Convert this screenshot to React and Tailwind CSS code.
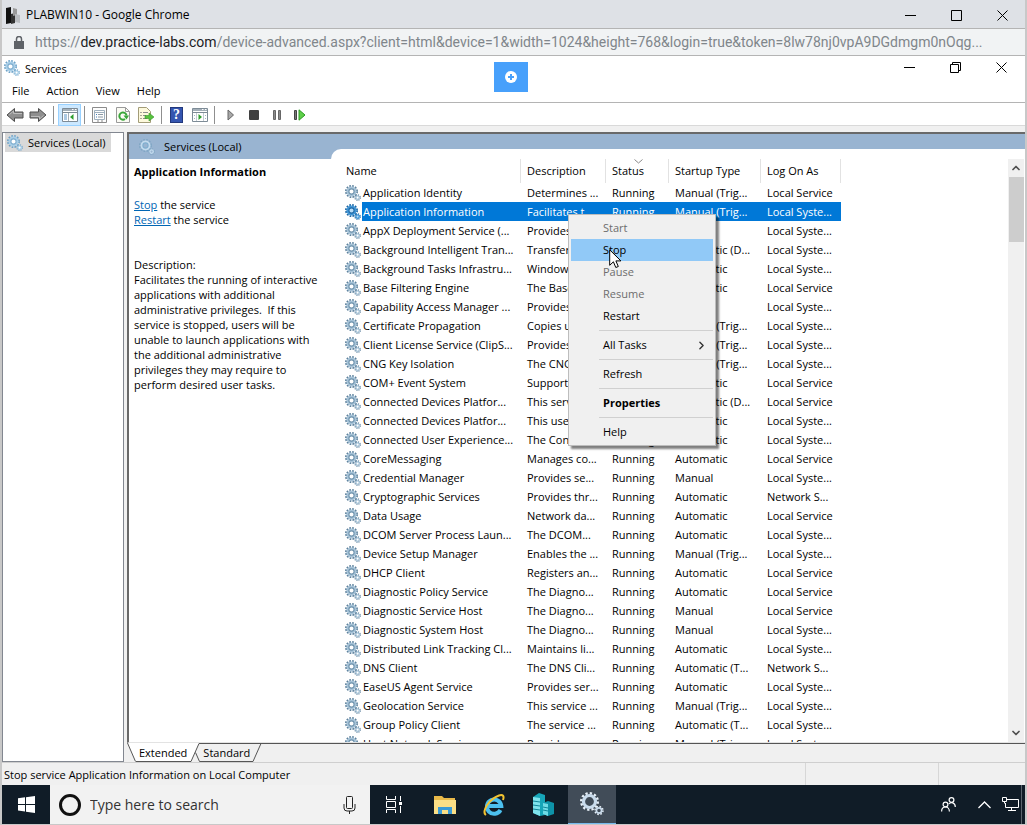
import React, { useState } from 'react';
import { ChevronUp, ChevronDown, ChevronRight } from 'lucide-react';

const services = [
  ['Application Identity', 'Determines ...', 'Manual (Trig...', 'Local Service'],
  ['Application Information', 'Facilitates t...', 'Manual (Trig...', 'Local Syste...'],
  ['AppX Deployment Service (...', 'Provides inf...', 'Manual', 'Local Syste...'],
  ['Background Intelligent Tran...', 'Transfers fil...', 'Automatic (D...', 'Local Syste...'],
  ['Background Tasks Infrastru...', 'Windows in...', 'Automatic', 'Local Syste...'],
  ['Base Filtering Engine', 'The Base Fil...', 'Automatic', 'Local Service'],
  ['Capability Access Manager ...', 'Provides fac...', 'Manual', 'Local Syste...'],
  ['Certificate Propagation', 'Copies user ...', 'Manual (Trig...', 'Local Syste...'],
  ['Client License Service (ClipS...', 'Provides inf...', 'Manual (Trig...', 'Local Syste...'],
  ['CNG Key Isolation', 'The CNG ke...', 'Manual (Trig...', 'Local Syste...'],
  ['COM+ Event System', 'Supports Sy...', 'Automatic', 'Local Service'],
  ['Connected Devices Platfor...', 'This service ...', 'Automatic (D...', 'Local Service'],
  ['Connected Devices Platfor...', 'This user ser...', 'Automatic', 'Local Syste...'],
  ['Connected User Experience...', 'The Connec...', 'Automatic', 'Local Syste...'],
  ['CoreMessaging', 'Manages co...', 'Automatic', 'Local Service'],
  ['Credential Manager', 'Provides se...', 'Manual', 'Local Syste...'],
  ['Cryptographic Services', 'Provides thr...', 'Automatic', 'Network S...'],
  ['Data Usage', 'Network da...', 'Automatic', 'Local Service'],
  ['DCOM Server Process Laun...', 'The DCOM...', 'Automatic', 'Local Syste...'],
  ['Device Setup Manager', 'Enables the ...', 'Manual (Trig...', 'Local Syste...'],
  ['DHCP Client', 'Registers an...', 'Automatic', 'Local Service'],
  ['Diagnostic Policy Service', 'The Diagno...', 'Automatic', 'Local Service'],
  ['Diagnostic Service Host', 'The Diagno...', 'Manual', 'Local Service'],
  ['Diagnostic System Host', 'The Diagno...', 'Manual', 'Local Syste...'],
  ['Distributed Link Tracking Cl...', 'Maintains li...', 'Automatic', 'Local Syste...'],
  ['DNS Client', 'The DNS Cli...', 'Automatic (T...', 'Network S...'],
  ['EaseUS Agent Service', 'Provides ser...', 'Automatic', 'Local Syste...'],
  ['Geolocation Service', 'This service ...', 'Manual (Trig...', 'Local Syste...'],
  ['Group Policy Client', 'The service ...', 'Automatic (T...', 'Local Syste...'],
  ['Host Network Service', 'Provides su...', 'Manual (Trig...', 'Local Syste...'],
];

const menuItems = [
  { label: 'Start', disabled: true },
  { label: 'Stop', active: true },
  { label: 'Pause', disabled: true },
  { label: 'Resume', disabled: true },
  { label: 'Restart' },
  null,
  { label: 'All Tasks', submenu: true },
  null,
  { label: 'Refresh' },
  null,
  { label: 'Properties', bold: true },
  null,
  { label: 'Help' },
];

const Gears = ({ className = 'size-4', body = '#a9cfe8', edge = '#6fa3c8', hole = '#7faecf', center = '#fff' }) => (
  <svg viewBox="0 0 16 16" className={className} fill="none">
    <circle cx="6.5" cy="6.5" r="5.6" stroke={edge} strokeWidth="1.8" strokeDasharray="1.7 1.232" />
    <circle cx="6.5" cy="6.5" r="5" fill={body} />
    <circle cx="6.5" cy="6.5" r="2.6" fill={center} stroke={hole} strokeWidth="1.1" />
    <circle cx="12.6" cy="12.6" r="2.6" stroke={edge} strokeWidth="1.4" strokeDasharray="1.1 0.942" />
    <circle cx="12.6" cy="12.6" r="1.7" fill={center} stroke={body} strokeWidth="1.3" />
  </svg>
);

const Minimize = () => <svg width="11" height="11" stroke="#000"><path d="M0 5.5h11" /></svg>;
const Close = () => <svg width="11" height="11" stroke="#000"><path d="M.5.5l10 10M10.5.5l-10 10" /></svg>;
const Maximize = () => <svg width="11" height="11" stroke="#000" fill="none"><path d="M.5.5h10v10H.5z" /></svg>;
const Restore = () => (
  <svg width="11" height="11" stroke="#000" fill="none"><path d="M.5 2.5h8v8h-8zM2.5 2.5v-2h8v8h-2" /></svg>
);

const WindowControls = ({ restore }) => (
  <div className="flex">
    <button aria-label="Minimize" className="w-[46px] h-[22px] flex items-center justify-center"><Minimize /></button>
    <button aria-label="Maximize" className="w-[46px] h-[22px] flex items-center justify-center">
      {restore ? <Restore /> : <Maximize />}
    </button>
    <button aria-label="Close" className="w-[46px] h-[22px] flex items-center justify-center"><Close /></button>
  </div>
);

const Arrow = ({ flip }) => (
  <svg width="18" height="16" viewBox="0 0 18 16" className={flip ? 'rotate-180' : ''}>
    <path d="M1 8l7.5-6.500V5H17v6H8.500v3.500z" fill="#8f8f8f" stroke="#4f4f4f" />
    <path d="M3.500 7.500l4-3.500v2.500H16" fill="none" stroke="#bdbdbd" />
  </svg>
);

const PaneIcon = ({ right }) => (
  <svg width="16" height="14" viewBox="0 0 16 14" fill="none">
    <path d="M.5.5h15v13H.5z" fill="#fff" stroke="#7d8b96" />
    <path d="M1 1h14v2H1z" fill="#a3afb9" />
    <path d="M10 1.500h1.500M13 1.500h1.500" stroke="#fff" />
    <path d="M1 4.500h14" stroke="#7d8b96" />
    {right ? (
      <>
        <path d="M4.500 5v8M11.500 5v8" stroke="#c3ccd3" />
        <path d="M2 7.500h1M2 10.500h1M13 7.500h1M13 10.500h1" stroke="#9fb5c7" />
        <path d="M6.500 6l3.500 3-3.500 3z" fill="#2f9e2f" />
      </>
    ) : (
      <>
        <path d="M6.500 5v8" stroke="#a3afb9" />
        <path d="M2 7h3M2 9h3M2 11h3" stroke="#5b94c8" />
        <path d="M11.500 6L8 9l3.500 3z" fill="#2f9e2f" />
      </>
    )}
  </svg>
);

const PropertiesIcon = () => (
  <svg width="15" height="16" viewBox="0 0 15 16" fill="none">
    <path d="M.5.5h14v15H.5z" fill="#fdfdfd" stroke="#8b8b8b" />
    <path d="M2.500 3.500h10v9h-10z" stroke="#9fb0be" />
    <path d="M3 5.500h9" stroke="#9fb0be" />
    <path d="M4 7.500h1M4 10h1" stroke="#3f7fc0" />
    <path d="M6 7.500h5M6 10h5" stroke="#8b9aa6" />
    <path d="M5 14h2M9 14h2" stroke="#8b8b8b" />
  </svg>
);

const RefreshIcon = () => (
  <svg width="14" height="16" viewBox="0 0 14 16" fill="none">
    <path d="M.5.5h9l4 4v11H.5z" fill="#fbfbf4" stroke="#9a9a9a" />
    <path d="M9.500.5v4h4" stroke="#9a9a9a" />
    <path d="M9 12A3.600 3.600 0 1 1 10.500 8.500" stroke="#3aa63a" strokeWidth="2" />
    <path d="M7.500 8.500h5.500L10.500 12.500z" fill="#3aa63a" />
  </svg>
);

const ExportIcon = () => (
  <svg width="16" height="16" viewBox="0 0 16 16" fill="none">
    <path d="M.5.5h8l4 4v11H.5z" fill="#fdf9dc" stroke="#a39c78" />
    <path d="M2.500 5.500h1M2.500 8.500h1M2.500 11.500h1" stroke="#555" />
    <path d="M5 5.500h5M5 8.500h3M5 11.500h4" stroke="#8d8d8d" />
    <path d="M7 8.500h4V6l5 4-5 4v-2.500H7z" fill="#58c23e" stroke="#35952a" strokeWidth=".6" />
  </svg>
);

const HelpIcon = () => (
  <span className="flex w-[13px] h-4 items-center justify-center bg-[#3455b0] border border-[#22387c] text-white font-bold text-sm leading-none font-['Liberation_Serif',serif]">?</span>
);

const Divider = () => <span className="w-px h-[18px] bg-[#8f8f8f] shrink-0" />;

const ToolButton = ({ label, active, children }) => (
  <button
    aria-label={label}
    className={`h-[22px] w-[23px] flex items-center justify-center ${active ? 'bg-[#cce8ff] border border-[#99d1ff]' : ''}`}
  >
    {children}
  </button>
);

const Toolbar = () => (
  <div className="h-[23px] flex items-center pl-px pt-px bg-white border-b border-[#d9d9d9]">
    <ToolButton label="Back"><Arrow /></ToolButton>
    <ToolButton label="Forward"><Arrow flip /></ToolButton>
    <div className="w-[9px] flex justify-center"><Divider /></div>
    <ToolButton label="Show/Hide Console Tree" active><PaneIcon /></ToolButton>
    <div className="w-[6px] flex justify-center"><Divider /></div>
    <div className="flex pl-px">
      <ToolButton label="Properties"><PropertiesIcon /></ToolButton>
      <ToolButton label="Refresh"><RefreshIcon /></ToolButton>
      <ToolButton label="Export List"><ExportIcon /></ToolButton>
    </div>
    <div className="w-2 flex justify-center"><Divider /></div>
    <ToolButton label="Help"><HelpIcon /></ToolButton>
    <ToolButton label="Show/Hide Action Pane"><PaneIcon right /></ToolButton>
    <div className="w-[6px] flex justify-center"><Divider /></div>
    <div className="flex pl-[2px]">
      <ToolButton label="Start Service">
        <svg width="8" height="12"><path d="M1 1l5.500 5L1 11z" fill="#a8a8a8" stroke="#666" /></svg>
      </ToolButton>
      <ToolButton label="Stop Service"><span className="size-[10px] bg-[#404040] rounded-[1px]" /></ToolButton>
      <ToolButton label="Pause Service">
        <svg width="8" height="10" fill="#8a8a8a" stroke="#666"><path d="M.5.5h2v9h-2zM5.500.5h2v9h-2z" /></svg>
      </ToolButton>
      <ToolButton label="Restart Service">
        <svg width="12" height="12">
          <path d="M.5 1.500h2v9h-2z" fill="#777" stroke="#444" />
          <path d="M5 .8L11 6l-6 5.200z" fill="#5fd04a" stroke="#2b9a22" />
        </svg>
      </ToolButton>
    </div>
  </div>
);

const ContextMenu = () => (
  <div role="menu" className="absolute left-[566px] top-[214px] w-[148px] py-[2px] bg-[#f0f0f0] border border-[#bdbdbd] shadow-[3px_3px_2px_rgba(0,0,0,0.5)]">
    {menuItems.map((item, i) =>
      item ? (
        <button
          key={item.label}
          role="menuitem"
          disabled={item.disabled}
          className={`flex items-center w-[142px] h-[22px] mx-[2px] pl-8 pr-[5px] text-left ${item.active ? 'bg-[#91c9f7]' : ''} ${item.disabled ? 'text-[#6d6d6d]' : ''} ${item.bold ? 'font-bold' : ''}`}
        >
          <span className="flex-1">{item.label}</span>
          {item.submenu && <ChevronRight size={13} strokeWidth={2.5} className="text-[#333]" />}
        </button>
      ) : (
        <div key={i} role="separator" className="h-px my-[3px] ml-[30px] mr-[2px] bg-[#d0d0d0]" />
      )
    )}
    <svg width="13" height="20" viewBox="0 0 13 20" className="absolute left-10 top-[34px]">
      <path d="M.7.8v15.500l3.700-3.500 2.400 5.700 2.500-1-2.400-5.600h5z" fill="#fff" stroke="#000" />
    </svg>
  </div>
);

const ServicesTable = ({ selected, onSelect }) => (
  <table className="table-fixed w-[501px] ml-[9px] border-separate border-spacing-0">
    <colgroup>
      <col className="w-[181px]" />
      <col className="w-[85px]" />
      <col className="w-[63px]" />
      <col className="w-[92px]" />
      <col className="w-[80px]" />
    </colgroup>
    <thead>
      <tr className="h-6">
        {['Name', 'Description', 'Status', 'Startup Type', 'Log On As'].map((h) => (
          <th key={h} className="relative p-0 pl-[6px] text-left font-normal whitespace-nowrap border-r border-[#e2e2e2]">
            {h}
            {h === 'Status' && (
              <svg width="9" height="5" className="absolute left-7 top-0" fill="none" stroke="#8a8a8a"><path d="M.5.5l4 3.500 4-3.500" /></svg>
            )}
          </th>
        ))}
      </tr>
    </thead>
    <tbody>
      {services.map(([name, desc, startup, logon], i) => {
        const on = i === selected;
        const cell = `p-0 pl-[6px] whitespace-nowrap overflow-hidden ${on ? 'bg-[#0078d7] text-white' : ''}`;
        return (
          <tr key={i} className="h-[19px] leading-[19px]" onClick={() => onSelect(i)}>
            <td className="p-0">
              <div className="flex items-center h-[19px] pl-[5px] gap-px">
                <Gears
                  className="size-4 shrink-0"
                  body={on ? '#3f95d6' : '#a6c3d8'}
                  edge={on ? '#1f68a5' : '#5f839e'}
                  hole={on ? '#1f68a5' : '#6f93ad'}
                  center={on ? '#b7dcf7' : '#fff'}
                />
                <span className={`flex-1 h-[19px] pl-px whitespace-nowrap overflow-hidden ${on ? 'bg-[#0078d7] text-white' : ''}`}>{name}</span>
              </div>
            </td>
            <td className={cell}>{desc}</td>
            <td className={cell}>Running</td>
            <td className={cell}>{startup}</td>
            <td className={cell}>{logon}</td>
          </tr>
        );
      })}
    </tbody>
  </table>
);

const Details = () => (
  <div className="flex-1 bg-white pl-[5px] pr-1 pt-[5px] leading-[15px]">
    <h2 className="font-bold">Application Information</h2>
    <p className="mt-[18px]"><a href="#stop" className="text-[#0066b4] underline">Stop</a> the service</p>
    <p><a href="#restart" className="text-[#0066b4] underline">Restart</a> the service</p>
    <p className="mt-[30px]">Description:</p>
    <p className="whitespace-pre-wrap">
      {'Facilitates the running of interactive applications with additional administrative privileges.  If this service is stopped, users will be unable to launch applications with the additional administrative privileges they may require to perform desired user tasks.'}
    </p>
  </div>
);

const Tabs = () => (
  <div className="flex h-[19px] leading-[19px]">
    <svg width="9" height="19"><path d="M0 0h9v19z" fill="#fff" /><path d="M.5 0l8 18.500" stroke="#555" /></svg>
    <button className="bg-white border-b border-[#555] px-[3px]">Extended</button>
    <svg width="13" height="19" fill="none">
      <path d="M0 0h9L1 18.500H0z" fill="#fff" />
      <path d="M0 18.500h1L9 .5h4M5.500 9.500l4 9H13" stroke="#555" />
    </svg>
    <button className="border-y border-[#555] leading-[18px]">Standard</button>
    <svg width="12" height="19" fill="none"><path d="M0 18.500h3L11 .5M0 .5h12" stroke="#555" /></svg>
    <span className="flex-1 border-t border-[#555]" />
  </div>
);

const Taskbar = () => (
  <div className="flex h-[39px] bg-[#101c27] text-white">
    <button aria-label="Start" className="w-12 flex items-center justify-center">
      <svg width="17" height="17" fill="#fff"><path d="M0 2.300L7 1.300V8H0zM8 1.200L17 0v8H8zM0 9h7v6.500L0 14.500zM8 9h9v8L8 15.700z" /></svg>
    </button>
    <div className="w-80 flex items-center bg-[#f2f2f2] pl-2 pr-[14px]">
      <svg width="24" height="24" fill="none" className="shrink-0"><circle cx="12" cy="12" r="9.500" stroke="#111" strokeWidth="3" /></svg>
      <input aria-label="Search" placeholder="Type here to search" className="flex-1 min-w-0 pl-2 bg-transparent outline-none text-sm placeholder:text-[#333]" />
      <svg width="13" height="18" fill="none" stroke="#222" className="shrink-0">
        <path d="M3.500 1.500q0-1 1-1h4q1 0 1 1v10q0 1-1 1h-4q-1 0-1-1zM1 8v4q0 3 3 3h5q3 0 3-3V8M6.500 15v3" />
      </svg>
    </div>
    <button aria-label="Task View" className="w-[50px] flex items-center pl-[15px]">
      <svg width="18" height="17" fill="none" stroke="#fff">
        <path d="M1.500 0v3.500h9V0M1.500 5.500h9v6h-9zM1.500 17v-3.500h9V17M15.500 0v5M15.500 10v7" />
        <path d="M14 6h3v3h-3z" fill="#fff" stroke="none" />
      </svg>
    </button>
    <button aria-label="File Explorer" className="w-[50px] flex items-center justify-center">
      <svg width="22" height="20">
        <path d="M0 1h8l2 2h11v16H0z" fill="#e9b949" />
        <path d="M0 5h22v14H0z" fill="#fbdf86" />
        <path d="M4 19v-7h14v7h-4v-4H8v4z" fill="#3a9bd6" />
      </svg>
    </button>
    <button aria-label="Internet Explorer" className="w-12 flex items-center justify-center">
      <svg width="24" height="24" viewBox="0 0 24 24" fill="none">
        <path d="M18.500 17A7.200 7.200 0 1 1 19.300 13H7" stroke="#4cc0ef" strokeWidth="4" />
        <path d="M4 22C-1 19 7 6 17 2.500c4-1.300 5.500.5 4 4.500" stroke="#f3c331" strokeWidth="2" />
      </svg>
    </button>
    <button aria-label="Server Manager" className="w-[50px] flex items-center justify-center">
      <svg width="22" height="23" viewBox="0 0 22 23">
        <path d="M1 4l6-4 6 2v20l-5 1-7-3z" fill="#16a5b8" />
        <path d="M1 4l7 1v18l-7-3z" fill="#7fe3ec" />
        <path d="M1 8l7 1M1 12l7 1M1 16l7 1" stroke="#118799" />
        <path d="M11 10l5-2 6 2v11l-6 2-5-2z" fill="#0e93a8" />
        <path d="M11 10l5 1v12l-5-2z" fill="#6edbe6" />
        <path d="M11 14l5 1M11 17l5 1" stroke="#118799" />
      </svg>
    </button>
    <button aria-label="Services" className="w-12 flex items-center justify-center bg-[#414c58] border-b border-[#76b9ed]">
      <svg width="24" height="24" viewBox="0 0 24 24" fill="none">
        <circle cx="9.500" cy="9.500" r="8.300" stroke="#e8f0f8" strokeWidth="2.400" strokeDasharray="2.300 2.046" />
        <circle cx="9.500" cy="9.500" r="6" stroke="#c9dbec" strokeWidth="3.200" />
        <circle cx="19" cy="18.500" r="4" stroke="#e8f0f8" strokeWidth="1.500" strokeDasharray="1.600 1.542" />
        <circle cx="19" cy="18.500" r="2.600" stroke="#c9dbec" strokeWidth="1.700" />
      </svg>
    </button>
    <div className="ml-auto flex items-center">
      <button aria-label="People" className="w-9 flex justify-center">
        <svg width="15" height="15" fill="none" stroke="#fff" strokeWidth="1.200">
          <circle cx="10.500" cy="3" r="2.400" /><circle cx="4.500" cy="7.500" r="2.400" />
          <path d="M.6 14.500c0-6 7.800-6 7.800 0M7.800 7c2-2.500 6.500-1.500 6.500 3" />
        </svg>
      </button>
      <button aria-label="Show hidden icons" className="w-9 flex justify-center">
        <svg width="13" height="8" fill="none" stroke="#fff" strokeWidth="1.300"><path d="M.5 7l6-6 6 6" /></svg>
      </button>
      <button aria-label="Network" className="w-[18px]">
        <svg width="17" height="15" fill="none" stroke="#fff">
          <path d="M5 2.500h11.500v8H3.500V6M9.500 10.500v3M6 13.500h8M.5.5h4v4h-4zM2.500 4.500v2" />
        </svg>
      </button>
      <span className="w-px h-[39px] bg-[#5a646d] ml-px mr-[3px]" />
    </div>
  </div>
);

const App = () => {
  const [selected, setSelected] = useState(1);

  return (
    <div className="relative flex flex-col h-screen overflow-hidden border-x-2 border-b border-[#c8c8c8] bg-[#f0f0f0] text-black text-[11px] leading-4 font-['Open_Sans','Noto_Sans',sans-serif]">
      <header>
        <div className="flex items-start h-7 pl-1 pt-1 bg-[#dee1e6]">
          <svg width="16" height="17" className="mt-[3px] mr-1" >
            <path d="M0 1l5-1v16l-5 1z" fill="#111" />
            <path d="M5 7l4-1v10l-4 1z" fill="#333" />
            <path d="M7 1l4 1v6l-4 1z" fill="#999" />
            <path d="M9 7l5 1v8l-5-1z" fill="#b9bcc0" />
          </svg>
          <h1 className="text-xs leading-[22px]">PLABWIN10 - Google Chrome</h1>
          <div className="ml-auto"><WindowControls /></div>
        </div>
        <div className="flex items-center h-7 pl-3 pr-6 bg-[#f1f3f4] border-y border-[#b4b4b4]">
          <svg width="10" height="13" className="shrink-0" fill="none"><path d="M0 5h10v8H0z" fill="#5f6368" /><path d="M2.500 5V3a2.500 2.500 0 0 1 5 0v2" stroke="#5f6368" strokeWidth="1.500" /></svg>
          <span className="ml-[11px] text-sm whitespace-nowrap text-[#80868b] font-['Roboto',sans-serif]">
            https://<span className="text-[#202124]">dev.practice-labs.com</span>/device-advanced.aspx?client=html&amp;device=1&amp;width=1024&amp;height=768&amp;login=true&amp;token=8lw78nj0vpA9DGdmgm0nOqg...
          </span>
        </div>
        <div className="flex items-start h-6 pl-[2px] bg-white">
          <Gears className="size-4 mt-1 mr-[5px]" />
          <span className="leading-[26px]">Services</span>
          <div className="ml-auto mr-px"><WindowControls restore /></div>
        </div>
        <nav className="flex h-[23px] pl-[10px] gap-[17px] bg-white border-b border-[#b4b4b4]">
          <button>File</button>
          <button>Action</button>
          <button>View</button>
          <button>Help</button>
        </nav>
        <Toolbar />
      </header>

      <button aria-label="Open panel" className="absolute left-[492px] top-[62px] w-[34px] h-[30px] flex items-center justify-center bg-[#47a0fb]">
        <svg width="12" height="12"><circle cx="6" cy="6" r="6" fill="#fff" /><path d="M6 3v6M3 6h6" stroke="#47a0fb" strokeWidth="2" /></svg>
      </button>

      <main className="flex flex-1 min-h-0 pt-[6px] gap-[3px]">
        <aside className="w-[122px] bg-white border border-[#828790]">
          <div className="inline-flex items-center h-[19px] ml-[2px] pl-[2px] pr-[5px] gap-[5px] bg-[#d9d9d9]">
            <Gears />
            <span className="whitespace-nowrap">Services (Local)</span>
          </div>
        </aside>
        <section className="flex-1 min-w-0 flex flex-col">
          <div className="flex-1 min-h-0 flex bg-[#99b4d1] border-l-2 border-t-2 border-b border-[#696969] border-b-[#e3e3e3]">
            <div className="w-[202px] flex flex-col">
              <div className="flex items-center h-[25px] pl-[10px] gap-[9px]">
                <Gears body="#c3dbee" edge="#7fa6c4" center="#99b4d1" />
                <span>Services (Local)</span>
              </div>
              <Details />
            </div>
            <div className="flex-1 min-w-0 pt-[15px] flex flex-col">
              <div className="flex-1 min-h-0 flex bg-white rounded-tl-[10px] pt-[10px] pr-px">
                <div className="flex-1 min-w-0 overflow-hidden">
                  <ServicesTable selected={selected} onSelect={setSelected} />
                </div>
                <div className="w-4 flex flex-col items-center bg-[#f0f0f0] text-[#505050]">
                  <ChevronUp size={12} strokeWidth={3.5} className="my-[3px] shrink-0" />
                  <div className="w-[15px] h-[65px] bg-[#cdcdcd]" />
                  <ChevronDown size={12} strokeWidth={3.5} className="mt-auto mb-[3px] shrink-0" />
                </div>
              </div>
            </div>
          </div>
          <Tabs />
        </section>
      </main>

      <footer>
        <div className="flex h-[23px] border-t border-[#cfcfcf] leading-6">
          <span className="flex-1 pl-[2px]">Stop service Application Information on Local Computer</span>
          <span className="w-[133px] border-l border-[#d7d7d7]" />
          <span className="w-[87px] border-l border-[#d7d7d7]" />
        </div>
        <Taskbar />
      </footer>

      <ContextMenu />
    </div>
  );
};

export default App;
